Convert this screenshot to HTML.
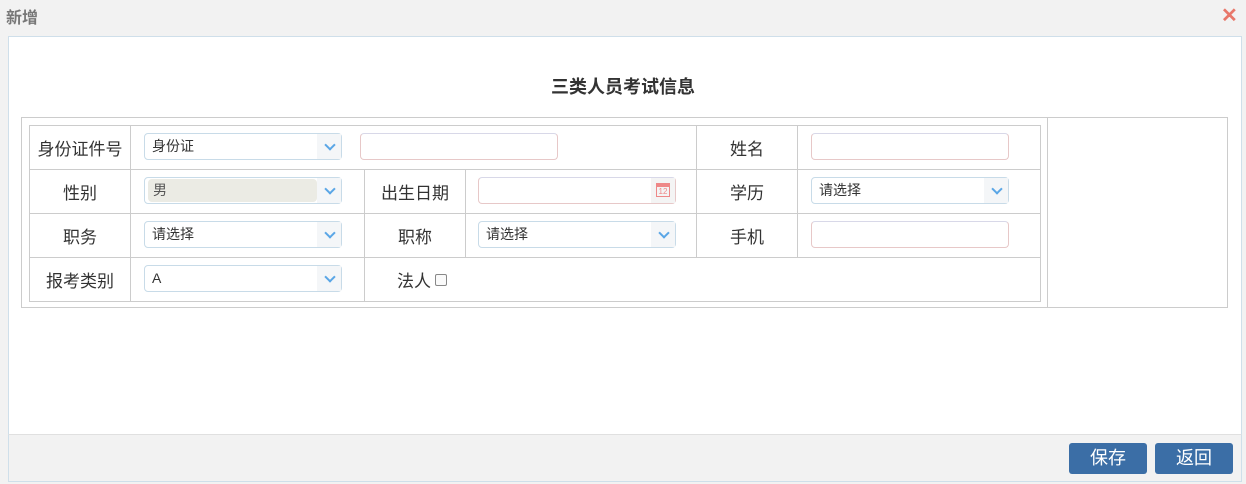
<!DOCTYPE html>
<html><head><meta charset="utf-8"><style>
*{box-sizing:border-box;margin:0;padding:0}
body{width:1246px;height:484px;background:#f2f2f2;font-family:"Liberation Sans","Noto Sans CJK SC",sans-serif;position:relative;overflow:hidden;color:#333}
.abs{position:absolute}
.title{left:6px;top:4px;font-size:16px;color:#777;font-weight:bold}
.close{left:1221px;top:3px;color:#e8776a;font-size:20px;font-weight:bold}
.panel{left:8px;top:36px;width:1234px;height:446px;border:1px solid #cfdfea;background:#fff}
.foot{left:8px;top:434px;width:1234px;height:48px;background:#f2f2f2;border:1px solid #cfdfea;border-top:1px solid #e0e0e0}
.h{left:0;width:1246px;top:73px;text-align:center;font-size:18px;font-weight:bold;color:#333}
.outer{left:21px;top:117px;width:1207px;height:191px;border:1px solid #ccc}
.vline{left:1047px;top:117px;width:1px;height:191px;background:#ccc}
.cell{position:absolute;border:1px solid #ccc;font-size:17px;display:flex;align-items:center;justify-content:center;color:#333}
.ctl{position:absolute;height:27px;border:1px solid #c8dbe8;border-radius:4px;background:#fff;font-size:14px;padding-left:7px;line-height:25px}
.sel::after{content:"";position:absolute;right:0;top:0;width:24px;height:25px;background:#f4f6f8}
.sel i{position:absolute;right:7px;top:7px;width:8px;height:8px;border-right:2px solid #5aa6e6;border-bottom:2px solid #5aa6e6;transform:rotate(45deg);z-index:1}
.inp{border-color:#e7c8c8;border-top-color:#d8d8e8}
.btn{position:absolute;top:443px;width:78px;height:31px;background:#3b6ea6;border-radius:3px;color:#fff;font-size:18px;text-align:center;line-height:31px}
</style></head><body>
<div class="abs title">新增</div>
<div class="abs close">✕</div>
<div class="abs panel"></div>
<div class="abs foot"></div>
<div class="abs h">三类人员考试信息</div>
<div class="abs outer"></div>
<div class="abs vline"></div>

<div class="cell" style="left:29px;top:125px;width:102px;height:45px">身份证件号</div>
<div class="cell" style="left:130px;top:125px;width:567px;height:45px"></div>
<div class="cell" style="left:696px;top:125px;width:102px;height:45px">姓名</div>
<div class="cell" style="left:797px;top:125px;width:244px;height:45px"></div>

<div class="cell" style="left:29px;top:169px;width:102px;height:45px">性别</div>
<div class="cell" style="left:130px;top:169px;width:235px;height:45px"></div>
<div class="cell" style="left:364px;top:169px;width:102px;height:45px">出生日期</div>
<div class="cell" style="left:465px;top:169px;width:232px;height:45px"></div>
<div class="cell" style="left:696px;top:169px;width:102px;height:45px">学历</div>
<div class="cell" style="left:797px;top:169px;width:244px;height:45px"></div>

<div class="cell" style="left:29px;top:213px;width:102px;height:45px">职务</div>
<div class="cell" style="left:130px;top:213px;width:235px;height:45px"></div>
<div class="cell" style="left:364px;top:213px;width:102px;height:45px">职称</div>
<div class="cell" style="left:465px;top:213px;width:232px;height:45px"></div>
<div class="cell" style="left:696px;top:213px;width:102px;height:45px">手机</div>
<div class="cell" style="left:797px;top:213px;width:244px;height:45px"></div>

<div class="cell" style="left:29px;top:257px;width:102px;height:45px">报考类别</div>
<div class="cell" style="left:130px;top:257px;width:235px;height:45px"></div>
<div class="cell" style="left:364px;top:257px;width:677px;height:45px;justify-content:flex-start;padding-left:32px">法人<span style="display:inline-block;width:12px;height:12px;border:1px solid #888;border-radius:2px;margin-left:4px;background:#fafafa"></span></div>

<div class="ctl sel" style="left:144px;top:133px;width:198px">身份证<i></i></div>
<div class="ctl inp" style="left:360px;top:133px;width:198px"></div>
<div class="ctl inp" style="left:811px;top:133px;width:198px"></div>

<div class="ctl sel" style="left:144px;top:177px;width:198px;padding-left:3px"><div style="background:#ebebe4;border-radius:4px;width:169px;height:23px;margin-top:1px;padding-left:5px;line-height:23px;color:#555">男</div><i></i></div>
<div class="ctl inp" style="left:478px;top:177px;width:198px"><div style="position:absolute;right:0;top:0;width:24px;height:25px;background:#f4f4f4"><div style="position:absolute;left:5px;top:5px;width:14px;height:14px;border:1px solid #e88;border-top:4px solid #e88;font-size:8px;line-height:9px;text-align:center;color:#e88">12</div></div></div>
<div class="ctl sel" style="left:811px;top:177px;width:198px">请选择<i></i></div>

<div class="ctl sel" style="left:144px;top:221px;width:198px">请选择<i></i></div>
<div class="ctl sel" style="left:478px;top:221px;width:198px">请选择<i></i></div>
<div class="ctl inp" style="left:811px;top:221px;width:198px"></div>

<div class="ctl sel" style="left:144px;top:265px;width:198px">A<i></i></div>

<div class="btn" style="left:1069px">保存</div>
<div class="btn" style="left:1155px">返回</div>
</body></html>
